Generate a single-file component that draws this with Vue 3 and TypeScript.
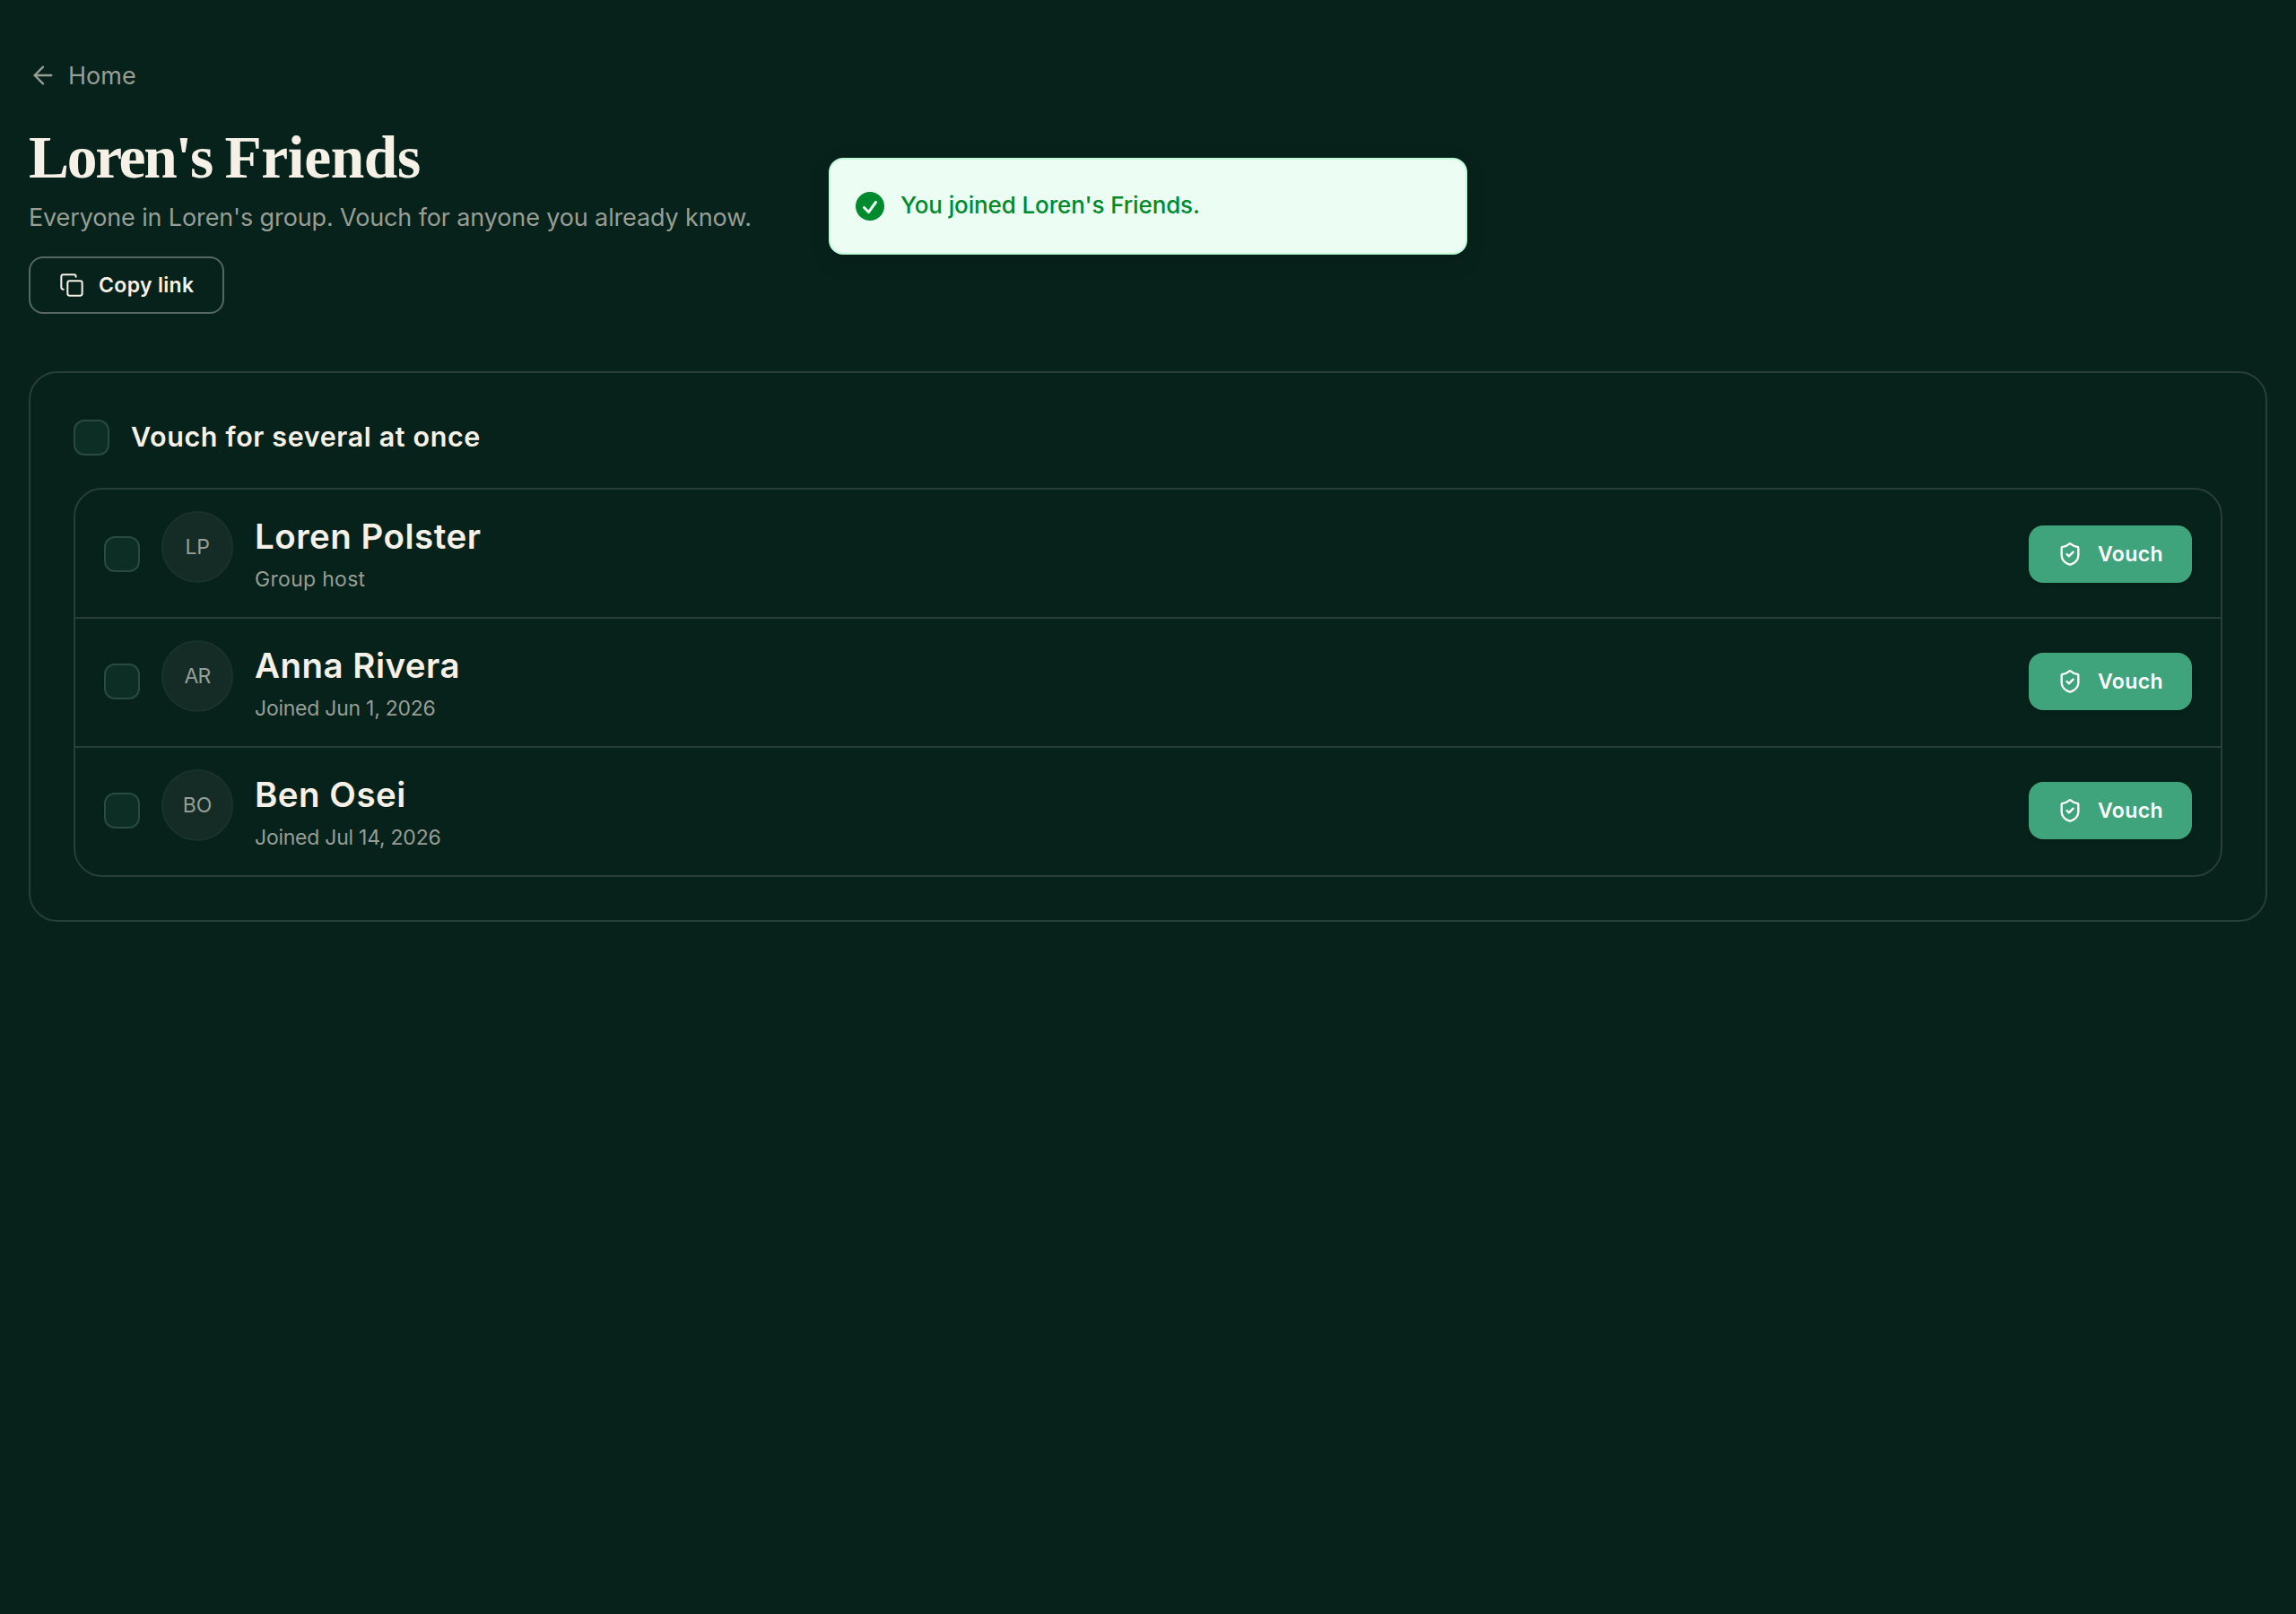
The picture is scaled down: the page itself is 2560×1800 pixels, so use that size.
<script setup lang="ts">
import { ref } from 'vue'

interface Member {
  initials: string
  name: string
  note: string
  noteSpacing: number
  initialsSpacing: number
}

const members: Member[] = [
  { initials: 'LP', name: 'Loren Polster', note: 'Group host', noteSpacing: 0.3, initialsSpacing: -0.3 },
  { initials: 'AR', name: 'Anna Rivera', note: 'Joined Jun 1, 2026', noteSpacing: -0.25, initialsSpacing: -0.8 },
  { initials: 'BO', name: 'Ben Osei', note: 'Joined Jul 14, 2026', noteSpacing: -0.25, initialsSpacing: 0 },
]

const selected = ref<Set<string>>(new Set())

function toggle(name: string): void {
  if (selected.value.has(name)) selected.value.delete(name)
  else selected.value.add(name)
}
</script>

<template>
  <main class="page">
    <a class="back">
      <svg class="back-icon" viewBox="0 0 24 24" fill="none" stroke="currentColor" stroke-width="1.75" stroke-linecap="round" stroke-linejoin="round">
        <path d="m12 19-7-7 7-7" />
        <path d="M19 12H5" />
      </svg>
      <span>Home</span>
    </a>

    <h1 class="title"><span class="owner">Loren's</span> Friends</h1>
    <p class="subtitle">Everyone in Loren's group. Vouch for anyone you already know.</p>

    <button class="copy" type="button">
      <svg class="btn-icon" viewBox="0 0 24 24" fill="none" stroke="currentColor" stroke-width="1.75" stroke-linecap="round" stroke-linejoin="round">
        <rect width="14" height="14" x="8" y="8" rx="2" ry="2" />
        <path d="M4 16c-1.1 0-2-.9-2-2V4c0-1.1.9-2 2-2h10c1.1 0 2 .9 2 2" />
      </svg>
      <span>Copy link</span>
    </button>

    <section class="card">
      <div class="bulk">
        <span class="check" role="checkbox"></span>
        <span class="bulk-label">Vouch for several at once</span>
      </div>

      <ul class="list">
        <li v-for="m in members" :key="m.name" class="row">
          <span class="check row-check" role="checkbox" :aria-checked="selected.has(m.name)" @click="toggle(m.name)"></span>
          <span class="avatar" :style="{ letterSpacing: m.initialsSpacing + 'px' }">{{ m.initials }}</span>
          <div class="who">
            <div class="name">{{ m.name }}</div>
            <div class="note" :style="{ letterSpacing: m.noteSpacing + 'px' }">{{ m.note }}</div>
          </div>
          <button class="vouch" type="button">
            <svg class="btn-icon" viewBox="0 0 24 24" fill="none" stroke="currentColor" stroke-width="2" stroke-linecap="round" stroke-linejoin="round">
              <path d="M20 13c0 5-3.5 7.5-7.66 8.95a1 1 0 0 1-.67-.01C7.5 20.5 4 18 4 13V6a1 1 0 0 1 1-1c2 0 4.5-1.2 6.24-2.72a1.17 1.17 0 0 1 1.52 0C14.51 3.81 17 5 19 5a1 1 0 0 1 1 1z" />
              <path d="m9 12 2 2 4-4" />
            </svg>
            <span>Vouch</span>
          </button>
        </li>
      </ul>
    </section>

    <div class="toast" role="status">
      <svg class="toast-icon" viewBox="0 0 20 20" fill="currentColor">
        <path fill-rule="evenodd" clip-rule="evenodd" d="M10 18a8 8 0 100-16 8 8 0 000 16zm3.857-9.809a.75.75 0 00-1.214-.882l-3.483 4.79-1.88-1.88a.75.75 0 10-1.06 1.061l2.5 2.5a.75.75 0 001.137-.089l4-5.5z" />
      </svg>
      <span class="toast-text">You joined Loren's Friends.</span>
    </div>
  </main>
</template>

<style>
body {
  background: #07221b;
}
</style>

<style scoped>
.page {
  box-sizing: border-box;
  position: relative;
  min-height: 1800px;
  padding: 68px 32px 0;
  background: #07221b;
  color: #f6f1e7;
  font-family: Inter, sans-serif;
}

.back {
  display: flex;
  align-items: center;
  gap: 12px;
  height: 32px;
  width: max-content;
  color: #969e95;
  font-size: 27px;
  font-weight: 400;
  letter-spacing: 0;
  line-height: 32px;
}

.back span {
  margin-top: 2px;
}

.back-icon {
  width: 32px;
  height: 32px;
}

.title {
  margin: 36px 0 0;
  font-family: "Liberation Serif", serif;
  font-size: 67.5px;
  font-weight: 700;
  letter-spacing: -0.4px;
  word-spacing: -2px;
  line-height: 80px;
}

.owner {
  letter-spacing: -2.3px;
}

.subtitle {
  margin: 7px 0 0;
  color: #969e95;
  font-size: 27px;
  font-weight: 400;
  letter-spacing: -0.13px;
  line-height: 40px;
}

.copy,
.vouch {
  box-sizing: border-box;
  display: flex;
  align-items: center;
  height: 64px;
  border-radius: 16px;
  font-family: inherit;
  font-size: 23px;
  font-weight: 600;
  line-height: 32px;
  white-space: nowrap;
}

.copy {
  width: 218px;
  margin-top: 23px;
  padding: 0 0 0 32px;
  gap: 16px;
  border: 2px solid #55675f;
  background: transparent;
  color: #f6f1e7;
  letter-spacing: 0.34px;
}

.btn-icon {
  flex: none;
  width: 28px;
  height: 28px;
}

.card {
  box-sizing: border-box;
  margin-top: 64px;
  padding: 52px 48px 48px;
  border: 2px solid #283e36;
  border-radius: 32px;
}

.bulk {
  display: flex;
  gap: 24px;
  height: 40px;
}

.bulk-label {
  font-size: 30.5px;
  font-weight: 600;
  letter-spacing: 0.6px;
  line-height: 38px;
}

.check {
  box-sizing: border-box;
  flex: none;
  width: 40px;
  height: 40px;
  border: 2px solid #294a40;
  border-radius: 12px;
  background: #0c2e25;
}

.list {
  margin: 36px 0 0;
  padding: 0;
  border: 2px solid #283e36;
  border-radius: 32px;
  list-style: none;
}

.row {
  box-sizing: border-box;
  display: flex;
  align-items: flex-start;
  height: 144px;
  padding: 24px 32px 0;
  border-bottom: 2px solid #283e36;
}

.row:last-child {
  height: 142px;
  border-bottom: 0;
}

.row-check {
  margin-top: 26px;
}

.row:first-child .row-check {
  margin-top: 28px;
}

.avatar {
  box-sizing: border-box;
  flex: none;
  width: 80px;
  height: 80px;
  margin-left: 24px;
  border: 2px solid #1a322b;
  border-radius: 50%;
  background: #152c26;
  color: #969e95;
  font-size: 23px;
  font-weight: 400;
  line-height: 76px;
  text-align: center;
}

.who {
  flex: 1;
  margin: 2px 0 0 24px;
}

.name {
  font-size: 38.5px;
  font-weight: 600;
  letter-spacing: 0.48px;
  line-height: 52px;
}

.note {
  margin-top: 6px;
  color: #969e95;
  font-size: 23px;
  font-weight: 400;
  line-height: 32px;
}

.vouch {
  width: 182px;
  margin-top: 14px;
  padding: 0 0 0 32px;
  gap: 17px;
  border: 0;
  background: #3fa37c;
  box-shadow: 0 2px 4px rgba(0, 0, 0, 0.12);
  color: #fff;
  letter-spacing: 0.4px;
}

.row:first-child .vouch {
  margin-top: 16px;
}

.toast {
  position: absolute;
  top: 176px;
  left: 50%;
  box-sizing: border-box;
  display: flex;
  align-items: center;
  width: 712px;
  height: 108px;
  margin-left: -356px;
  padding-left: 24px;
  border: 2px solid #bffcd9;
  border-radius: 16px;
  background: #ecfdf3;
  box-shadow: 0 8px 24px rgba(0, 0, 0, 0.1);
  color: #008a2e;
}

.toast-icon {
  flex: none;
  width: 40px;
  height: 40px;
}

.toast-text {
  margin: -3px 0 0 14px;
  font-size: 26px;
  font-weight: 500;
  letter-spacing: -0.12px;
  line-height: 39px;
}
</style>
